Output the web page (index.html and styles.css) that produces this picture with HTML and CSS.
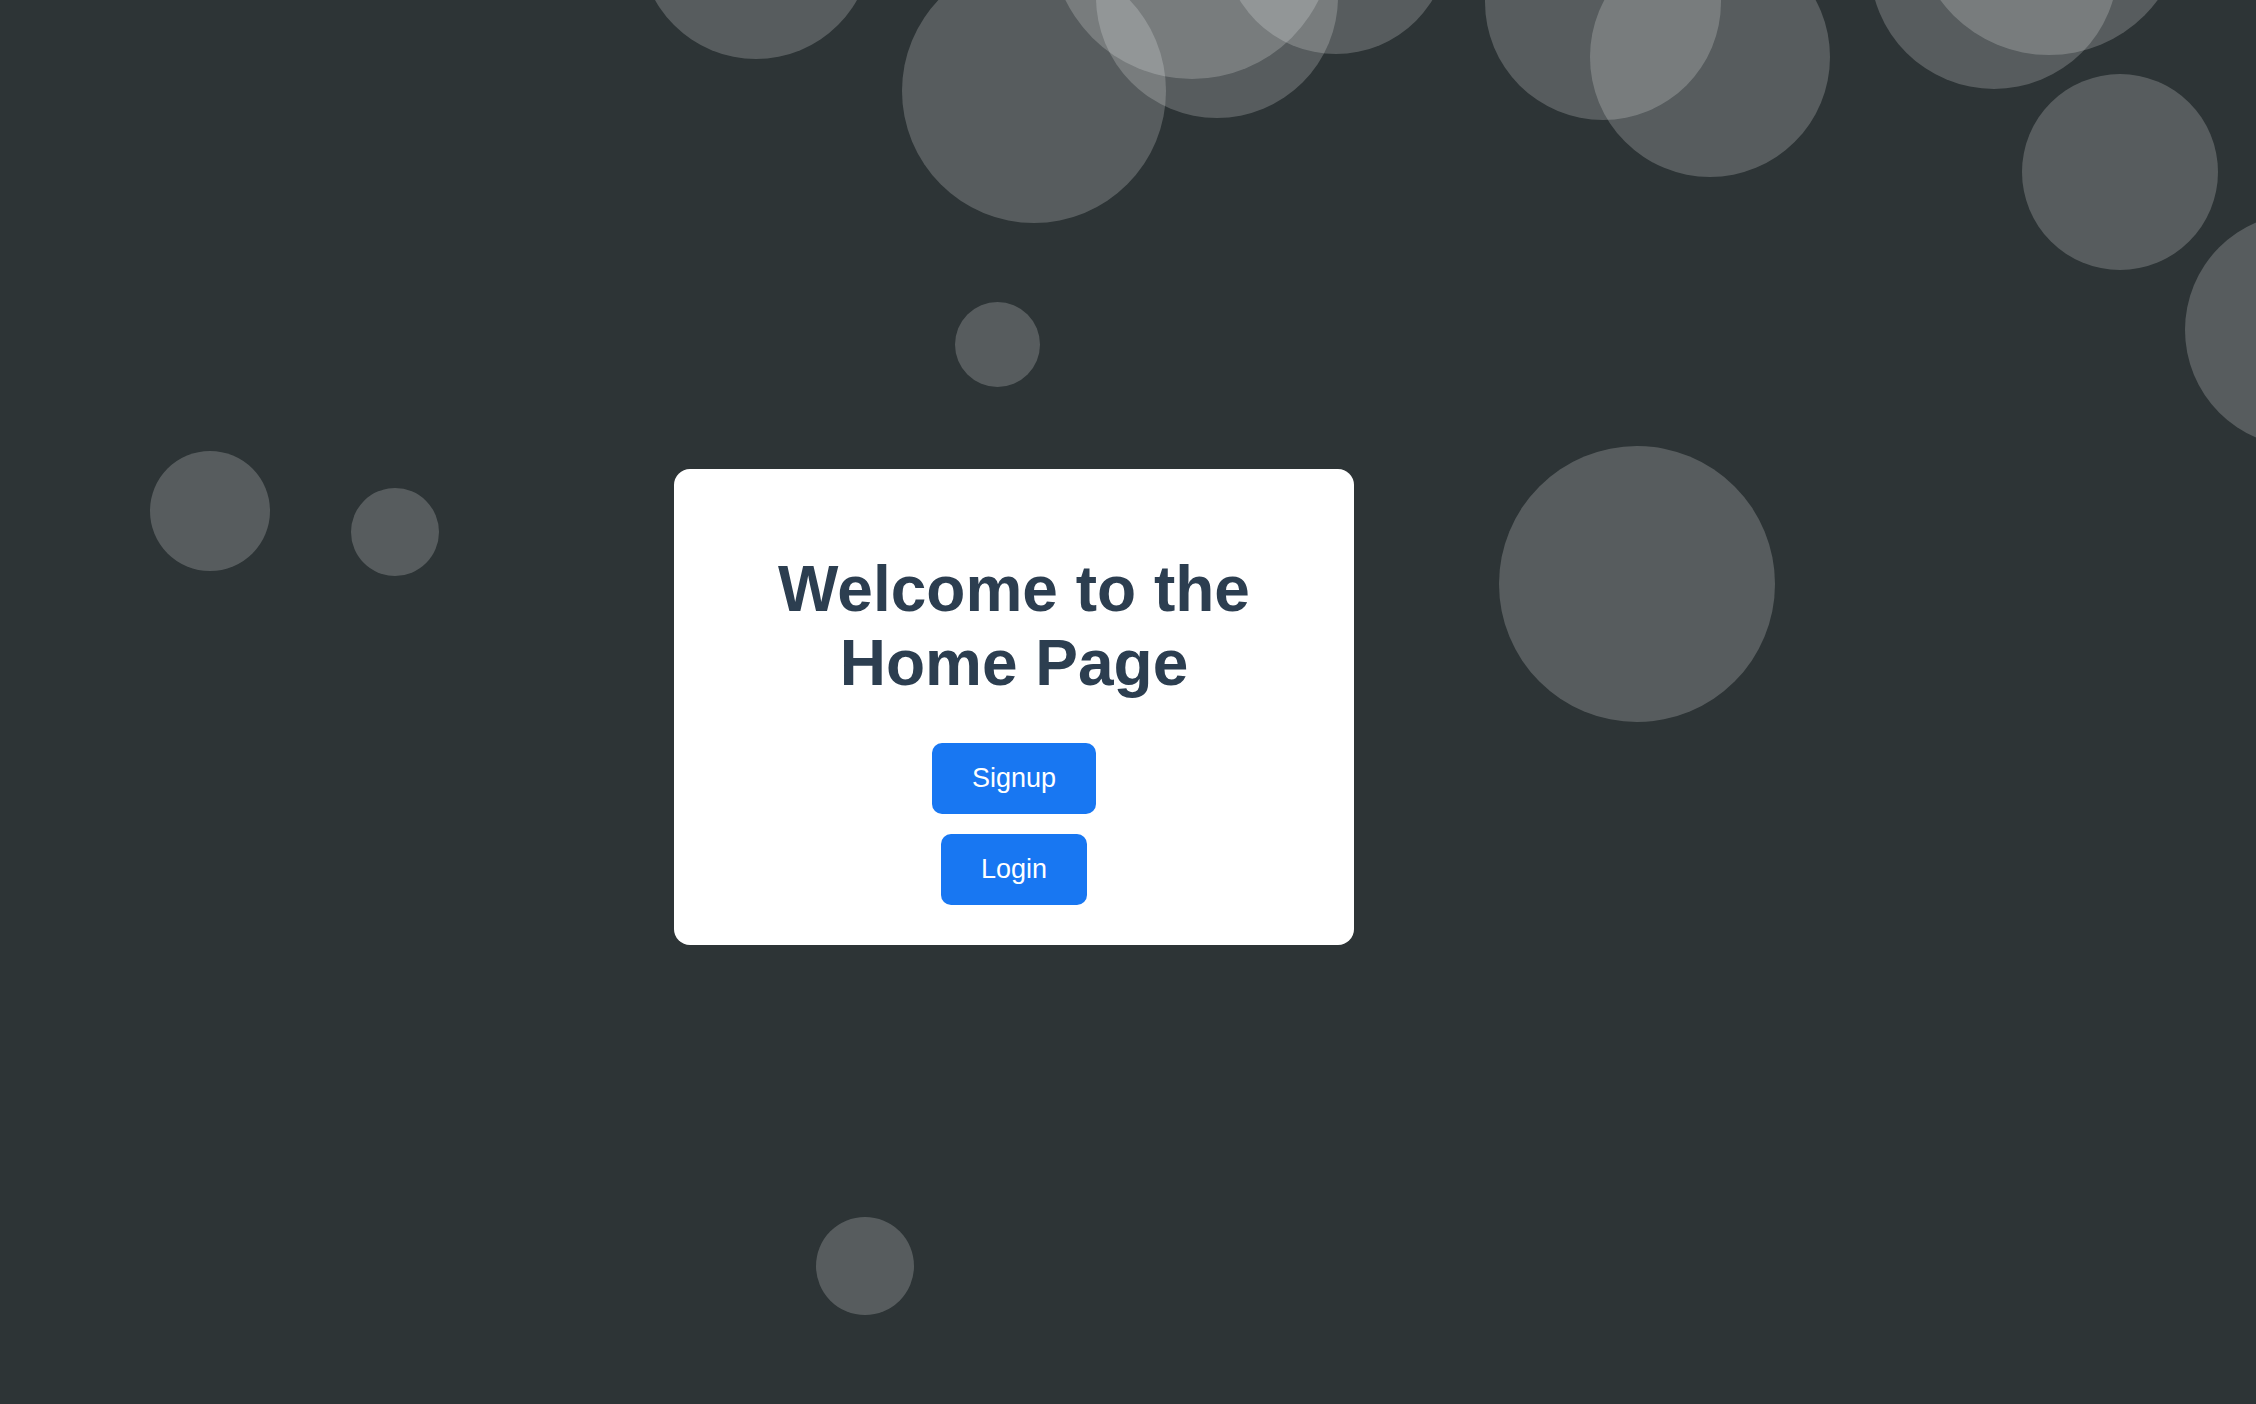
FILE: index.html
```html
<!DOCTYPE html>
<html lang="en">
<head>
<meta charset="utf-8">
<title>Home</title>
<link rel="stylesheet" href="styles.css">
</head>
<body>
<div class="bubbles" aria-hidden="true">
  <span class="bubble b1"></span>
  <span class="bubble b2"></span>
  <span class="bubble b3"></span>
  <span class="bubble b4"></span>
  <span class="bubble b5"></span>
  <span class="bubble b6"></span>
  <span class="bubble b7"></span>
  <span class="bubble b8"></span>
  <span class="bubble b9"></span>
  <span class="bubble b10"></span>
  <span class="bubble b11"></span>
  <span class="bubble b12"></span>
  <span class="bubble b13"></span>
  <span class="bubble b14"></span>
  <span class="bubble b15"></span>
  <span class="bubble b16"></span>
</div>
<main class="page">
  <section class="card">
    <h1 class="title">Welcome to the Home Page</h1>
    <div class="actions">
      <button class="btn" type="button">Signup</button>
      <button class="btn" type="button">Login</button>
    </div>
  </section>
</main>
</body>
</html>
```
FILE: styles.css
```css
html, body {
  margin: 0;
  padding: 0;
}
body {
  background: #2d3436;
  font-family: "Liberation Sans", Arial, sans-serif;
  overflow: hidden;
}
.bubbles {
  position: fixed;
  inset: 0;
  overflow: hidden;
  z-index: 0;
}
.bubble {
  position: absolute;
  border-radius: 50%;
  background: rgba(255, 255, 255, 0.2);
}
.b1 { left: 640px; top: -173px; width: 232px; height: 232px; }
.b2 { left: 902px; top: -41px; width: 264px; height: 264px; }
.b3 { left: 1096px; top: -124px; width: 242px; height: 242px; }
.b4 { left: 1051px; top: -203px; width: 282px; height: 282px; }
.b5 { left: 1223px; top: -172px; width: 226px; height: 226px; }
.b6 { left: 1485px; top: -116px; width: 236px; height: 236px; }
.b7 { left: 1590px; top: -63px; width: 240px; height: 240px; }
.b8 { left: 1870px; top: -159px; width: 248px; height: 248px; }
.b9 { left: 1914px; top: -215px; width: 270px; height: 270px; }
.b10 { left: 2022px; top: 74px; width: 196px; height: 196px; }
.b11 { left: 2185px; top: 213px; width: 234px; height: 234px; }
.b12 { left: 1499px; top: 446px; width: 276px; height: 276px; }
.b13 { left: 955px; top: 302px; width: 85px; height: 85px; }
.b14 { left: 150px; top: 451px; width: 120px; height: 120px; }
.b15 { left: 351px; top: 488px; width: 88px; height: 88px; }
.b16 { left: 816px; top: 1217px; width: 98px; height: 98px; }

.page {
  position: relative;
  z-index: 1;
  box-sizing: border-box;
  min-height: 100vh;
  display: flex;
  align-items: center;
  padding: 10px 0 0 674px;
}
.card {
  box-sizing: border-box;
  width: 680px;
  padding: 40px;
  background: #ffffff;
  border-radius: 16px;
  text-align: center;
}
.title {
  margin: 0.67em 0;
  font-size: 64px;
  font-weight: bold;
  line-height: normal;
  color: #2c3e50;
}
.actions {
  display: flex;
  flex-direction: column;
  align-items: center;
  gap: 20px;
}
.btn {
  font-family: "Liberation Sans", Arial, sans-serif;
  font-size: 27px;
  line-height: normal;
  padding: 20px 40px;
  border: none;
  border-radius: 10px;
  background: #1877f2;
  color: #ffffff;
  cursor: pointer;
}
```
